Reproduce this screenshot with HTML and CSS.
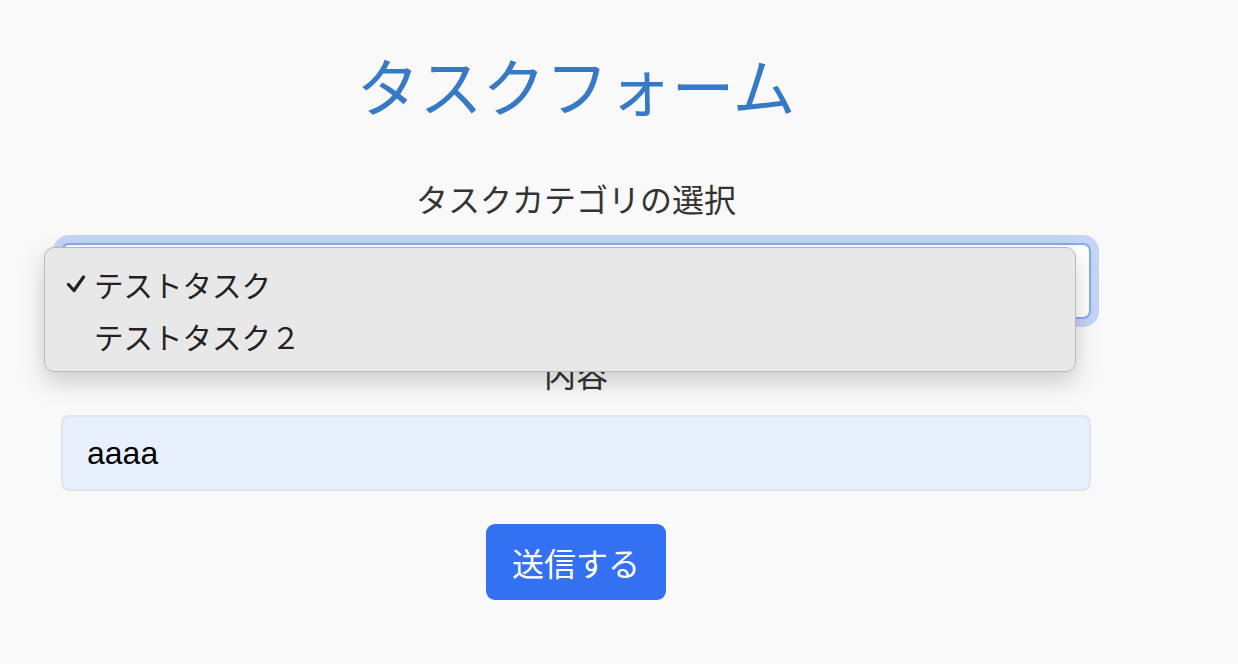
FILE: index.html
```html
<!DOCTYPE html>
<html lang="ja">
<head>
<meta charset="utf-8">
<title>タスクフォーム</title>
<link rel="stylesheet" href="styles.css">
</head>
<body>
<main class="container">
  <h1 class="title">タスクフォーム</h1>
  <form class="form">
    <div class="field">
      <label class="label">タスクカテゴリの選択</label>
      <div class="select-wrap">
        <div class="select"></div>
        <ul class="menu">
          <li class="option"><span class="check"><svg width="20" height="18" viewBox="0 0 20 18"><path d="M2.5 9.5 L8 15.5 L17.5 2" fill="none" stroke="#222" stroke-width="3.2" stroke-linecap="round" stroke-linejoin="round"/></svg></span>テストタスク</li>
          <li class="option"><span class="check"></span>テストタスク２</li>
        </ul>
      </div>
    </div>
    <div class="field">
      <label class="label">内容</label>
      <input class="input" type="text" value="aaaa">
    </div>
    <div class="actions">
      <button type="button" class="button">送信する</button>
    </div>
  </form>
</main>
</body>
</html>
```

FILE: styles.css
```css
* { box-sizing: border-box; }
html, body { margin: 0; padding: 0; }
body {
  background: #f9f9f9;
  font-family: "Noto Sans CJK JP", "Noto Sans", sans-serif;
  color: #333;
}
.container {
  width: 1030px;
  margin-left: 61px;
  padding-top: 42px;
}
.title {
  margin: 0;
  text-align: center;
  font-weight: 400;
  font-size: 63px;
  line-height: 84px;
  color: #3679c7;
}
.form {
  display: flex;
  flex-direction: column;
  margin-top: 50px;
}
.field {
  display: flex;
  flex-direction: column;
}
.label {
  text-align: center;
  font-size: 32px;
  line-height: 44px;
  color: #333;
}
.select-wrap {
  position: relative;
  margin-top: 23px;
}
.select {
  height: 76px;
  background: #fff;
  border: 2px solid #86a9ef;
  border-radius: 8px;
  box-shadow: 0 0 0 8px #c4d4f4;
}
.menu {
  position: absolute;
  left: -17px;
  top: 4px;
  width: 1032px;
  height: 125px;
  margin: 0;
  padding: 10px 0 0 0;
  list-style: none;
  background: #e8e8e8;
  border: 1px solid #b9b9b9;
  border-radius: 10px;
  box-shadow: 0 10px 24px rgba(0, 0, 0, 0.18);
  z-index: 2;
}
.option {
  display: flex;
  align-items: center;
  height: 52px;
  padding-left: 21px;
  font-size: 29.5px;
  color: #222;
}
.check {
  display: inline-flex;
  align-items: center;
  width: 28px;
  height: 20px;
}
.field + .field { margin-top: 32px; }
.input {
  margin-top: 20px;
  height: 76px;
  padding: 0 24px;
  background: #e8f0fe;
  border: 2px solid #dfe3ea;
  border-radius: 8px;
  font-family: "Liberation Sans", Arial, sans-serif;
  font-size: 32px;
  color: #000;
  outline: none;
}
.actions {
  display: flex;
  justify-content: center;
  margin-top: 33px;
}
.button {
  width: 180px;
  height: 76px;
  border: none;
  border-radius: 9px;
  background: #3370f2;
  color: #fff;
  font-family: "Noto Sans CJK JP", sans-serif;
  font-size: 32px;
  cursor: pointer;
}
```
